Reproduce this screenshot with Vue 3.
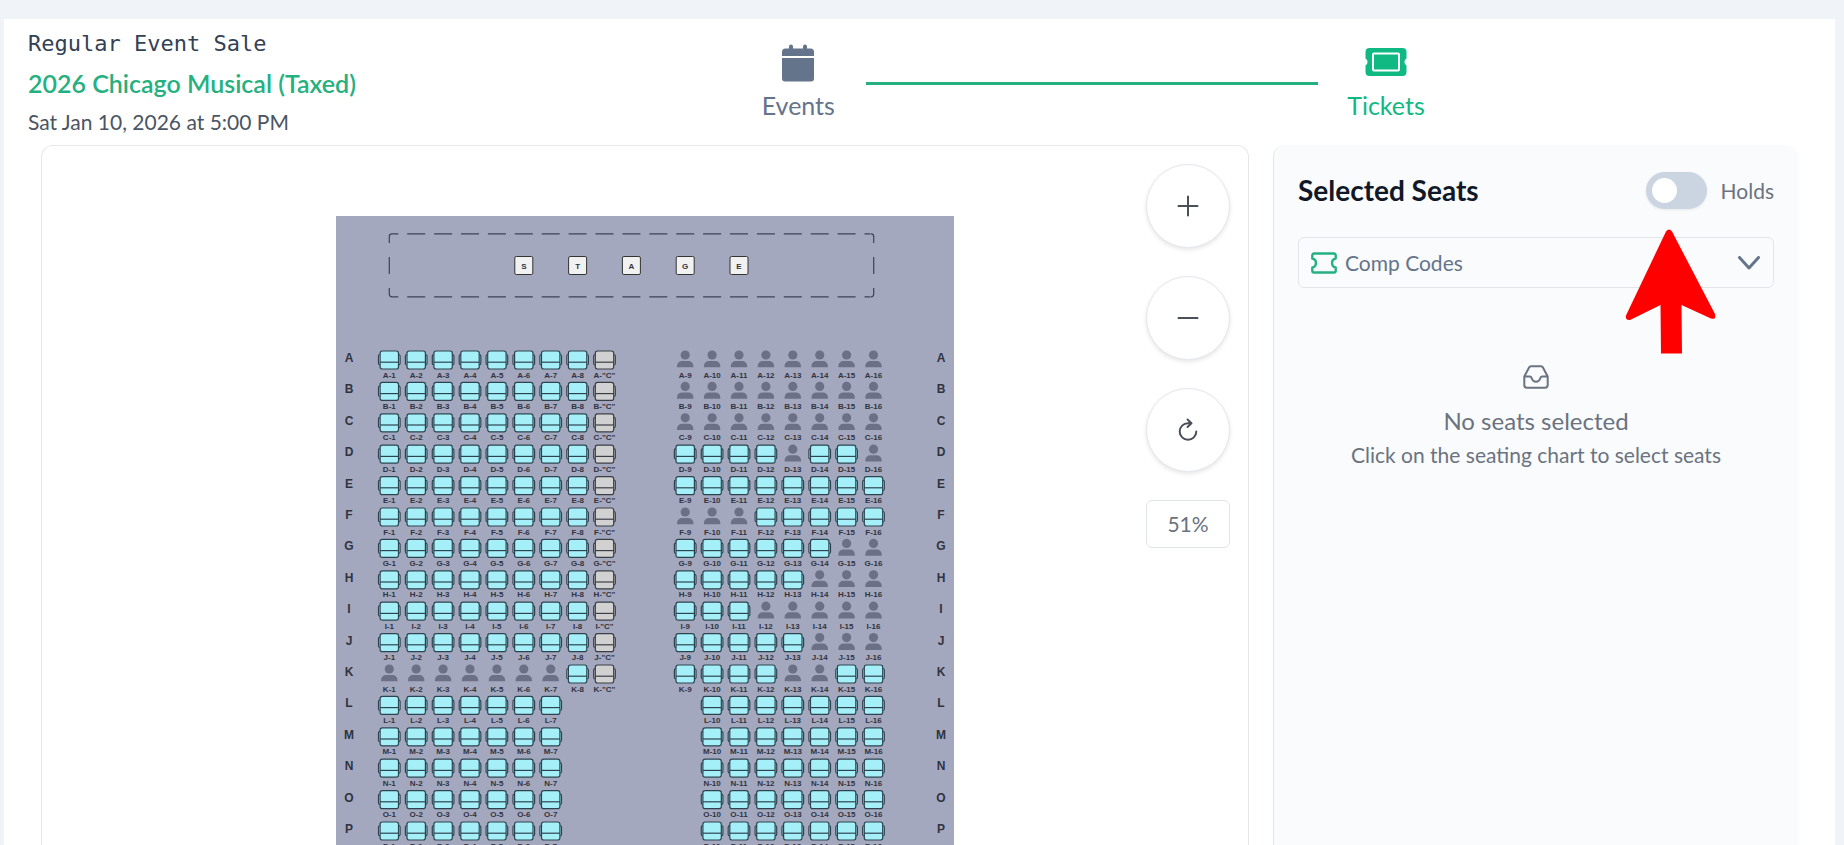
<script setup>
import { ref } from 'vue'

const holds = ref(false)
const compCode = ref('')

const COL = 26.9
const ROW = 31.4
const X0 = 53.3
const Y0 = 144

// Seats already sold in each row, by number
const sold = {
  A: [9, 10, 11, 12, 13, 14, 15, 16],
  B: [9, 10, 11, 12, 13, 14, 15, 16],
  C: [9, 10, 11, 12, 13, 14, 15, 16],
  D: [13, 16],
  F: [9, 10, 11],
  G: [15, 16],
  H: [14, 15, 16],
  I: [12, 13, 14, 15, 16],
  J: [14, 15, 16],
  K: [1, 2, 3, 4, 5, 6, 7, 13, 14],
}

const rows = 'ABCDEFGHIJKLMNOP'.split('').map((name, r) => {
  const front = r < 11
  const y = Y0 + r * ROW
  const seats = []
  for (let n = 1; n <= 16; n++) {
    if (!front && (n === 8 || n === 9)) continue
    const col = n <= 8 ? n - 1 : n + 2
    seats.push({
      label: `${name}-${n}`,
      x: X0 + col * COL,
      y,
      state: (sold[name] || []).includes(n) ? 'sold' : 'open',
    })
  }
  if (front) seats.push({ label: `${name}-"C"`, x: X0 + 8 * COL, y, state: 'companion' })
  return { name, y, seats }
})

const stage = 'STAGE'.split('').map((letter, i) => ({ letter, x: X0 + (5 + i * 2) * COL }))
</script>

<template>
  <div class="page">
    <main class="sheet">
      <header class="top">
        <div class="event">
          <div class="kind">Regular Event Sale</div>
          <h1>2026 Chicago Musical (Taxed)</h1>
          <div class="date">Sat Jan 10, 2026 at 5:00 PM</div>
        </div>
        <nav class="steps" aria-label="Progress">
          <a href="#events" class="step">
            <svg width="34" height="38" viewBox="0 0 34 38" fill="currentColor">
              <path d="M1 12V8a3.500 3.500 0 0 1 3.500-3.500H8V2.500a2 2 0 0 1 4 0v2h10v-2a2 2 0 0 1 4 0v2h3.500A3.500 3.500 0 0 1 33 8v4z" />
              <path d="M1 14h32v20.500a3 3 0 0 1-3 3H4a3 3 0 0 1-3-3z" />
            </svg>
            <span>Events</span>
          </a>
          <div class="line"></div>
          <a href="#tickets" class="step active">
            <svg width="42" height="38" viewBox="0 0 42 38" fill="currentColor">
              <path d="M4.500 4h33a4 4 0 0 1 4 4v6.500a4 4 0 0 0 0 7V28a4 4 0 0 1-4 4h-33a4 4 0 0 1-4-4v-6.500a4 4 0 0 0 0-7V8a4 4 0 0 1 4-4z" />
              <rect x="8" y="9.500" width="26" height="17" rx="1" fill="none" stroke="#fff" stroke-width="2" />
            </svg>
            <span>Tickets</span>
          </a>
        </nav>
      </header>

      <div class="body">
        <section class="canvas" aria-label="Seating chart">
          <svg class="chart" width="618" height="760" viewBox="0 0 618 760">
            <rect width="618" height="760" fill="#a4a8be" />
            <g fill="none" stroke="#3d4258" stroke-width="1.200">
              <path d="M56 17.800H534.500M56 80.800H534.500" stroke-dasharray="18 8.900" stroke-dashoffset="11.700" />
              <path d="M53.300 41V58M537.700 41V58" />
              <path d="M53.300 27V20.500q0-2.700 2.700-2.700M53.300 72V78q0 2.800 2.700 2.800M537.700 27V20.500q0-2.700-2.700-2.700M537.700 72V78q0 2.800-2.700 2.800" />
            </g>
            <g v-for="(s, i) in stage" :key="i" :transform="`translate(${s.x} 49.500)`">
              <rect x="-9" y="-9" width="18" height="18" rx="1.500" fill="#f1f1f1" stroke="#333" />
              <text class="seat-label" y="3">{{ s.letter }}</text>
            </g>
            <g v-for="row in rows" :key="row.name">
              <text class="row-label" x="13" :y="row.y + 2">{{ row.name }}</text>
              <text class="row-label" x="605" :y="row.y + 2">{{ row.name }}</text>
              <g
                v-for="seat in row.seats"
                :key="seat.label"
                :class="seat.state"
                :transform="`translate(${seat.x} ${seat.y})`"
              >
                <g v-if="seat.state === 'sold'" fill="#6b7086">
                  <circle cy="-5" r="4.600" />
                  <path d="M-8.200 7.300V6a5 5 0 0 1 5-5h6.400a5 5 0 0 1 5 5v1.300z" />
                </g>
                <g v-else class="chair">
                  <path d="M-9-5.500q-1.800 0-1.800 1.500v7.500q0 1.500 1.800 1.500M9-5.500q1.800 0 1.800 1.500v7.500q0 1.500-1.800 1.500" />
                  <rect x="-9.200" y="-9" width="18.400" height="18" rx="2.200" />
                  <path d="M-9.200 2.200H9.200" />
                </g>
                <text class="seat-label" y="17.500">{{ seat.label }}</text>
              </g>
            </g>
          </svg>

          <div class="controls">
            <button type="button" aria-label="Zoom in">
              <svg width="24" height="24" viewBox="0 0 24 24"><path d="M12 2.500v19M2.500 12h19" /></svg>
            </button>
            <button type="button" aria-label="Zoom out">
              <svg width="24" height="24" viewBox="0 0 24 24"><path d="M2.500 12h19" /></svg>
            </button>
            <button type="button" aria-label="Reset view">
              <svg width="24" height="24" viewBox="0 0 24 24"><path d="M20.300 13.500A8.300 8.300 0 1 1 12 5.200h3.500M11.500 1.500l4 3.700-4 3.800" /></svg>
            </button>
            <div class="percent">51%</div>
          </div>
        </section>

        <aside class="panel">
          <div class="panel-head">
            <h2>Selected Seats</h2>
            <label class="switch">
              <input v-model="holds" type="checkbox" role="switch" />
              <span>Holds</span>
            </label>
          </div>
          <div class="comp">
            <svg class="ticket" width="26" height="22" viewBox="0 0 26 22">
              <path d="M3 1.500h20a1.700 1.700 0 0 1 1.700 1.700v3.300a4.600 4.600 0 0 0 0 9v3.300A1.700 1.700 0 0 1 23 20.500H3a1.700 1.700 0 0 1-1.700-1.700v-3.300a4.600 4.600 0 0 0 0-9V3.200A1.700 1.700 0 0 1 3 1.500z" />
            </svg>
            <select v-model="compCode" aria-label="Comp Codes">
              <option value="">Comp Codes</option>
            </select>
            <svg class="chevron" width="22" height="14" viewBox="0 0 22 14"><path d="M1.500 1.500 11 12l9.500-10.500" /></svg>
          </div>
          <div class="empty">
            <svg width="26" height="24" viewBox="0 0 26 24">
              <path d="M1.300 11.500 6.200 2.300Q6.700 1.200 8 1.200h10q1.300 0 1.800 1.100l4.900 9.200V20q0 2.700-2.700 2.700H4Q1.300 22.700 1.300 20zM1.300 11.500h5.500q1.300 0 1.700 1.300 1.300 4 4.500 4t4.500-4q.4-1.300 1.700-1.300h5.500" />
            </svg>
            <p class="empty-title">No seats selected</p>
            <p class="empty-hint">Click on the seating chart to select seats</p>
          </div>
          <svg class="pointer" width="92" height="126" viewBox="0 0 92 126" aria-hidden="true">
            <path d="M41 2.500Q44 -1.500 47 2.500L90 85q1.500 6-4 4.500L56.500 76 57 124.500H36L35.500 76 5 91q-5 .5-4-4.500z" fill="#f00" />
          </svg>
        </aside>
      </div>
    </main>
  </div>
</template>

<style>
body {
  background: #f0f4f9;
}
</style>

<style scoped>
.page {
  box-sizing: border-box;
  height: 100vh;
  padding: 19px 9px 0 4px;
  overflow: hidden;
  background: #f0f4f9;
  font-family: Lato, "Liberation Sans", sans-serif;
  color: #4b5563;
}
.sheet {
  box-sizing: border-box;
  height: 100%;
  display: flex;
  flex-direction: column;
  background: #fff;
}
h1, h2, p {
  margin: 0;
}
.top {
  display: grid;
  grid-template-columns: 1fr 2fr;
  height: 126px;
  flex: none;
}
.event {
  padding: 5px 0 0 24px;
  white-space: nowrap;
}
.kind {
  font: 22px/40px "DejaVu Sans Mono", monospace;
  color: #334155;
}
h1 {
  font-size: 25px;
  line-height: 38px;
  font-weight: 600;
  color: #25b07f;
}
.date {
  font-size: 21px;
  line-height: 40px;
}
.steps {
  display: flex;
  align-items: flex-start;
  justify-content: center;
  padding-top: 25px;
  margin-left: 116px;
  margin-right: 381px;
}
.step {
  display: flex;
  flex-direction: column;
  align-items: center;
  gap: 7px;
  width: 136px;
  flex: none;
  font-size: 25px;
  line-height: 32px;
  text-decoration: none;
  color: #64748b;
}
.step.active {
  color: #10b981;
}
.line {
  flex: 1;
  height: 3px;
  margin-top: 38px;
  background: #25b07f;
}
.body {
  flex: 1;
  min-height: 0;
  display: grid;
  grid-template-columns: minmax(0, 1208fr) minmax(0, 525fr);
  gap: 24px;
  padding: 0 37px;
}
.canvas {
  position: relative;
  display: flex;
  justify-content: center;
  align-items: flex-start;
  padding-top: 70px;
  border: 1px solid #e5e7eb;
  border-bottom: 0;
  border-radius: 12px 12px 0 0;
  overflow: hidden;
}
.chart {
  flex: none;
  display: block;
}
.chart text {
  font-family: "Liberation Sans", Arial, sans-serif;
  font-weight: 700;
  text-anchor: middle;
  fill: #30333f;
}
.chart .seat-label {
  font-size: 8px;
}
.chart .row-label {
  font-size: 12px;
}
.chair {
  fill: #a5f0f8;
  stroke: #2d4450;
  stroke-width: 1.200;
}
.companion .chair {
  fill: #d1d1d1;
  stroke: #3b3e45;
}
.controls {
  position: absolute;
  top: 18px;
  right: 18px;
  display: flex;
  flex-direction: column;
  gap: 28px;
}
.controls button {
  width: 84px;
  height: 84px;
  padding: 0;
  display: grid;
  place-items: center;
  border: 1px solid #e5e7eb;
  border-radius: 50%;
  background: #fff;
  box-shadow: 0 2px 4px rgba(0, 0, 0, 0.1);
}
.controls svg {
  fill: none;
  stroke: #4b4f58;
  stroke-width: 2;
  stroke-linecap: round;
  stroke-linejoin: round;
}
.percent {
  border: 1px solid #e0e3e7;
  border-radius: 6px;
  background: #fff;
  font-size: 21px;
  line-height: 46px;
  text-align: center;
  color: #6b7280;
}
.panel {
  position: relative;
  padding: 24px 24px 0 24px;
  border-left: 1px solid #e2e6ea;
  border-radius: 12px 12px 0 0;
  background: #f9fbfc;
}
.panel-head {
  display: flex;
  align-items: center;
  justify-content: space-between;
  height: 42px;
}
h2 {
  font-size: 28px;
  line-height: 42px;
  font-weight: 700;
  color: #111827;
}
.switch {
  display: flex;
  align-items: center;
  gap: 14px;
  font-size: 21px;
  color: #6b7280;
}
.switch input {
  appearance: none;
  box-sizing: border-box;
  width: 61px;
  height: 37px;
  margin: 0;
  padding: 6px;
  border-radius: 19px;
  background: #cbd5e1;
  box-shadow: 0 1px 3px rgba(0, 0, 0, 0.08);
}
.switch input::before {
  content: "";
  display: block;
  width: 25px;
  height: 25px;
  border-radius: 50%;
  background: #fff;
}
.switch input:checked::before {
  margin-left: 24px;
}
.comp {
  display: grid;
  grid-template-columns: 46px 1fr 35px;
  align-items: center;
  margin-top: 26px;
  border: 1px solid #e2e6ea;
  border-radius: 6px;
}
.comp svg {
  fill: none;
  stroke-linecap: round;
  stroke-linejoin: round;
  pointer-events: none;
}
.comp select {
  grid-area: 1 / 1 / 2 / 4;
  appearance: none;
  width: 100%;
  height: 49px;
  padding: 0 46px;
  border: 0;
  background: transparent;
  font-family: inherit;
  font-size: 21px;
  color: #64748b;
}
.ticket {
  grid-area: 1 / 1;
  margin-left: 12px;
  stroke: #25b07f;
  stroke-width: 2.400;
}
.chevron {
  grid-area: 1 / 3;
  stroke: #64748b;
  stroke-width: 3;
}
.empty {
  display: flex;
  flex-direction: column;
  align-items: center;
  padding-top: 77px;
  color: #6b7280;
  white-space: nowrap;
}
.empty svg {
  fill: none;
  stroke: #6b7280;
  stroke-width: 2;
  stroke-linejoin: round;
}
.empty-title {
  margin-top: 14px;
  font-size: 24px;
  line-height: 36px;
}
.empty-hint {
  font-size: 21px;
  line-height: 32px;
}
.pointer {
  position: absolute;
  top: 84px;
  right: 81px;
}
</style>
